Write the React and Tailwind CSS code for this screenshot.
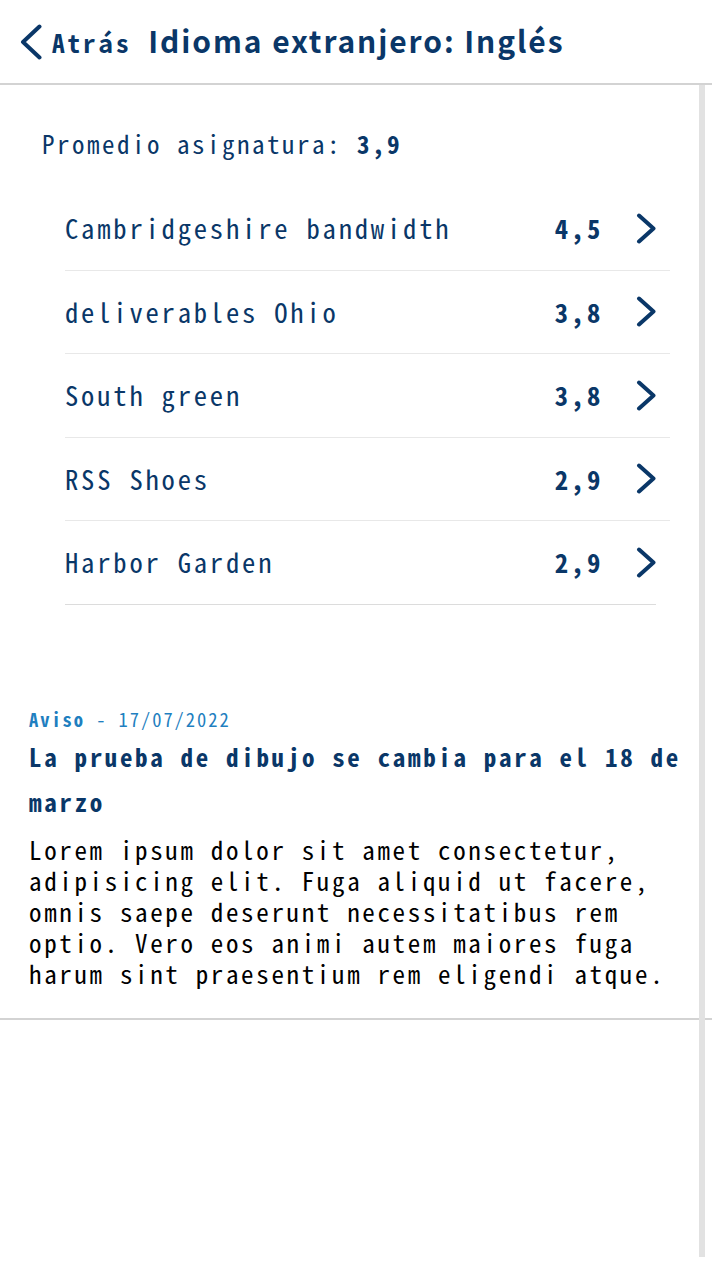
const items = [
  { name: "Cambridgeshire bandwidth", value: "4,5" },
  { name: "deliverables Ohio", value: "3,8" },
  { name: "South green", value: "3,8" },
  { name: "RSS Shoes", value: "2,9" },
  { name: "Harbor Garden", value: "2,9" },
];

function Chevron() {
  return (
    <svg width="20" height="31" viewBox="0 0 20 31" fill="none" className="shrink-0">
      <path d="M3 2.5 L17.5 15.5 L3 28.5" stroke="#0a3768" strokeWidth="4" strokeLinecap="round" strokeLinejoin="round" />
    </svg>
  );
}

export default function App() {
  return (
    <div className="relative w-[712px] h-[1268px] bg-white overflow-hidden text-[#0a3768] font-['Noto_Sans_Mono_CJK_SC',monospace]">
      <header className="h-[85px] flex items-center pl-[20px] border-b-2 border-[#d3d3d3]">
        <svg width="22" height="36" viewBox="0 0 22 36" fill="none" className="shrink-0">
          <path d="M19.5 2.5 L3 18 L19.5 33.5" stroke="#0a3768" strokeWidth="4" strokeLinecap="round" strokeLinejoin="round" />
        </svg>
        <span className="ml-[10px] text-[25.4px] tracking-[2.7px] font-bold leading-[32px]">Atrás</span>
        <span className="ml-[17px] pb-[3px] text-[30px] font-bold leading-[40px] tracking-[1.9px] font-['Noto_Sans_CJK_SC',sans-serif]">Idioma extranjero: Inglés</span>
      </header>

      <main>
        <div className="pt-[42px] pl-[42px] text-[25px] tracking-[2.5px] leading-[32px]">
          Promedio asignatura: <span className="font-bold">3,9</span>
        </div>

        <ul className="mt-[28px] ml-[65px] mr-[42px]">
          {items.map((it, i) => (
            <li key={i}>
              <div className="flex items-center h-[82.5px] text-[26.6px] tracking-[2.8px]">
                <span className="flex-1">{it.name}</span>
                <span className="font-bold">{it.value}</span>
                <span className="ml-[33px] mr-[14px] flex"><Chevron /></span>
              </div>
              <div className={i === items.length - 1 ? "h-px bg-[#dcdcdc] mr-[14px]" : "h-px bg-[#e8e8e8]"} />
            </li>
          ))}
        </ul>

        <section className="mt-[102px] px-[29px] pb-[29px] border-b-2 border-[#d3d3d3]">
          <div className="text-[18.5px] tracking-[1.95px] leading-[24px] text-[#1f7fc0]">
            <span className="font-bold">Aviso</span> - 17/07/2022
          </div>
          <h2 className="mt-[3.5px] text-[25px] tracking-[2.66px] leading-[45px] font-bold">
            La prueba de dibujo se cambia para el 18 de marzo
          </h2>
          <p className="mt-[10px] text-[25px] tracking-[2.65px] leading-[31px] text-black">
            Lorem ipsum dolor sit amet consectetur, adipisicing elit. Fuga aliquid ut facere, omnis saepe deserunt necessitatibus rem optio. Vero eos animi autem maiores fuga harum sint praesentium rem eligendi atque.
          </p>
        </section>
      </main>

      <div className="absolute left-[699px] top-[85px] w-[6px] h-[1172px] bg-[#e2e2e2]" />
    </div>
  );
}
